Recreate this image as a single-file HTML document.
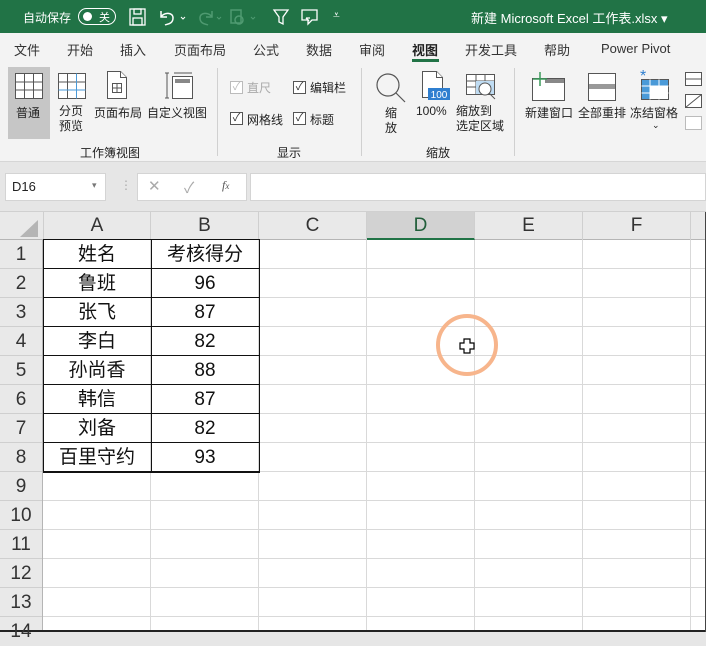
<!DOCTYPE html>
<html><head><meta charset="utf-8">
<style>
*{margin:0;padding:0;box-sizing:border-box}
body{width:706px;height:632px;overflow:hidden;position:relative;background:#e6e6e6;font-family:"Liberation Sans","Noto Sans CJK SC",sans-serif;color:#222}
.a{position:absolute}
.t{font-size:12px;white-space:nowrap}
#title{left:0;top:0;width:706px;height:33px;background:#217346;color:#fff}
#tabs{left:0;top:33px;width:706px;height:29px;background:#f3f3f3}
#rib{left:0;top:62px;width:706px;height:100px;background:#f3f3f3;border-bottom:1px solid #d6d6d6}
.tab{top:7px;font-size:13px;color:#333}
.sep{width:1px;background:#d0d0d0}
.cb{width:13px;height:13px;border:1px solid #555;background:#fff;font-size:11px;line-height:11px;text-align:center;color:#333}
.cell{position:absolute;text-align:center;font-size:19px;color:#111;line-height:29px}
.rn{position:absolute;left:0;width:42px;text-align:center;font-size:19px;color:#333;line-height:29px}
.ch{position:absolute;top:212px;height:28px;text-align:center;font-size:19px;line-height:28px;color:#333;border-right:1px solid #cfcfcf}
</style></head><body>
<div id="title" class="a">
 <div class="a t" style="left:23px;top:9px;font-size:12px">自动保存</div>
 <div class="a" style="left:78px;top:8px;width:38px;height:17px;border:1.5px solid #fff;border-radius:9px"></div>
 <div class="a" style="left:83px;top:12px;width:9px;height:9px;border-radius:50%;background:#fff"></div>
 <div class="a t" style="left:99px;top:9px;font-size:11px">关</div>
 <svg class="a" style="left:128px;top:7px" width="20" height="20" fill="none" stroke="#fff" stroke-width="1.3"><rect x="2" y="2" width="15" height="16"/><rect x="6" y="2" width="7" height="5"/><rect x="5" y="11" width="9" height="7"/></svg>
 <svg class="a" style="left:158px;top:8px" width="40" height="18" fill="none" stroke="#fff" stroke-width="1.5"><path d="M3 3v6h6M3 9c3-5 12-5 12 1s-6 6-8 7"/><path d="M23 9l2 2 2-2" stroke-width="1"/></svg>
 <svg class="a" style="left:198px;top:8px" width="70" height="18" fill="none" stroke="#4f9a71" stroke-width="1.5"><path d="M14 3v6H8M14 9c-3-5-12-5-12 1s6 6 8 7"/><path d="M19 9l2 2 2-2" stroke-width="1"/><rect x="33" y="2" width="10" height="13"/><circle cx="41" cy="12" r="4"/><path d="M53 9l2 2 2-2" stroke-width="1"/></svg>
 <svg class="a" style="left:272px;top:8px" width="18" height="18" fill="none" stroke="#fff" stroke-width="1.3"><path d="M2 2h14l-5 7v7l-4-2v-5z"/></svg>
 <svg class="a" style="left:300px;top:8px" width="20" height="18" fill="none" stroke="#fff" stroke-width="1.3"><path d="M2 2h15v10h-5l-4 4v-4H2z"/><path d="M6 10l3 3M6 10h4"/></svg>
 <div class="a t" style="left:333px;top:8px;font-size:12px">⩡</div>
 <div class="a t" style="left:471px;top:8px;font-size:13px">新建 Microsoft Excel 工作表.xlsx ▾</div>
</div>
<div id="tabs" class="a">
 <div class="a tab" style="left:14px">文件</div>
 <div class="a tab" style="left:67px">开始</div>
 <div class="a tab" style="left:120px">插入</div>
 <div class="a tab" style="left:174px">页面布局</div>
 <div class="a tab" style="left:253px">公式</div>
 <div class="a tab" style="left:306px">数据</div>
 <div class="a tab" style="left:359px">审阅</div>
 <div class="a tab" style="left:412px;font-weight:bold;color:#222">视图</div>
 <div class="a" style="left:412px;top:26px;width:27px;height:3px;background:#217346"></div>
 <div class="a tab" style="left:465px">开发工具</div>
 <div class="a tab" style="left:544px">帮助</div>
 <div class="a tab" style="left:601px;top:8px">Power Pivot</div>
</div>
<div id="rib" class="a">
 <div class="a" style="left:8px;top:5px;width:42px;height:72px;background:#c6c6c6"></div>
 <svg class="a" style="left:14px;top:10px" width="30" height="28" fill="#fff" stroke="#555" stroke-width="1"><rect x="1.5" y="1.5" width="27" height="25"/><path d="M10.5 1.5v25M19.5 1.5v25M1.5 10h27M1.5 18h27"/></svg>
 <div class="a t" style="left:16px;top:42px;font-size:12px">普通</div>
 <svg class="a" style="left:57px;top:10px" width="30" height="28" fill="#fff" stroke="#555" stroke-width="1"><rect x="1.5" y="1.5" width="27" height="25"/><path d="M10.5 1.5v25M1.5 10h27" /><path d="M19.5 1.5v25M1.5 18h27" stroke="#4a9ad8"/></svg>
 <div class="a t" style="left:59px;top:42px;line-height:15px">分页<br>预览</div>
 <svg class="a" style="left:105px;top:8px" width="24" height="30" fill="#fff" stroke="#555" stroke-width="1"><path d="M2.5 1.5h13l6 6v21h-19z"/><path d="M15.5 1.5v6h6"/><rect x="7.5" y="13.5" width="9" height="9"/><path d="M12 13.5v9M7.5 18h9"/></svg>
 <div class="a t" style="left:94px;top:42px">页面布局</div>
 <svg class="a" style="left:162px;top:8px" width="32" height="30" fill="#fff" stroke="#555" stroke-width="1"><path d="M3 3h4M5 3v25M3 28h4M12 3h18"/><rect x="10.5" y="6.5" width="20" height="22"/><rect x="13" y="9" width="15" height="4" fill="#888" stroke="none"/></svg>
 <div class="a t" style="left:147px;top:42px">自定义视图</div>
 <div class="a t" style="left:80px;top:82px">工作簿视图</div>
 <div class="a sep" style="left:217px;top:6px;height:88px"></div>
 <div class="a cb" style="left:230px;top:19px;border-color:#bbb;color:#bbb">✓</div><div class="a t" style="left:247px;top:17px;color:#aaa">直尺</div>
 <div class="a cb" style="left:293px;top:19px">✓</div><div class="a t" style="left:310px;top:17px">编辑栏</div>
 <div class="a cb" style="left:230px;top:50px">✓</div><div class="a t" style="left:247px;top:49px">网格线</div>
 <div class="a cb" style="left:293px;top:50px">✓</div><div class="a t" style="left:310px;top:49px">标题</div>
 <div class="a t" style="left:277px;top:82px">显示</div>
 <div class="a sep" style="left:361px;top:6px;height:88px"></div>
 <svg class="a" style="left:375px;top:10px" width="32" height="32" fill="none" stroke="#555" stroke-width="1.2"><circle cx="13" cy="13" r="11"/><path d="M21 21l9 9"/></svg>
 <div class="a t" style="left:385px;top:44px;line-height:15px">缩<br>放</div>
 <svg class="a" style="left:421px;top:8px" width="30" height="32" fill="#fff" stroke="#555" stroke-width="1"><path d="M1.5 1.5h14l6 6v20h-20z"/><path d="M15.5 1.5v6h6"/><rect x="7" y="18" width="22" height="12" fill="#2f7fd0" stroke="none"/><text x="18" y="28" font-size="10" fill="#fff" stroke="none" text-anchor="middle" font-family="Liberation Sans">100</text></svg>
 <div class="a t" style="left:416px;top:42px">100%</div>
 <svg class="a" style="left:465px;top:11px" width="34" height="30" fill="#fff" stroke="#555" stroke-width="1"><rect x="1.5" y="1.5" width="28" height="20"/><path d="M1.5 8h28M1.5 14h28M11 1.5v20M20 1.5v20"/><rect x="11" y="8" width="18" height="13" fill="#bfdcf3" stroke="none"/><circle cx="20" cy="16" r="6"/><path d="M24 20l6 6"/></svg>
 <div class="a t" style="left:456px;top:42px;line-height:15px">缩放到<br>选定区域</div>
 <div class="a t" style="left:426px;top:82px">缩放</div>
 <div class="a sep" style="left:514px;top:6px;height:88px"></div>
 <svg class="a" style="left:531px;top:10px" width="36" height="30" fill="#fff" stroke="#555" stroke-width="1"><rect x="1.5" y="6.5" width="32" height="22"/><rect x="14" y="7" width="19" height="4" fill="#888" stroke="none"/><path d="M9 0v14M2 7h14" stroke="#3a9a5a" stroke-width="1.5"/></svg>
 <div class="a t" style="left:525px;top:42px">新建窗口</div>
 <svg class="a" style="left:587px;top:10px" width="30" height="30" fill="#fff" stroke="#555" stroke-width="1"><rect x="1.5" y="1.5" width="27" height="27"/><rect x="2" y="12" width="26" height="5" fill="#999" stroke="none"/></svg>
 <div class="a t" style="left:578px;top:42px">全部重排</div>
 <svg class="a" style="left:638px;top:6px" width="32" height="34" fill="#fff" stroke="#555" stroke-width="1"><rect x="3.5" y="11.5" width="27" height="20"/><rect x="4" y="12" width="26" height="6" fill="#4a9ad8" stroke="none"/><rect x="4" y="12" width="8" height="19" fill="#4a9ad8" stroke="none"/><path d="M12 11.5v20M21 11.5v20M3.5 18h27M3.5 25h27" stroke="#fff"/><text x="2" y="13" font-size="16" fill="#2f7fd0" stroke="none" font-family="Liberation Sans">*</text></svg>
 <div class="a t" style="left:630px;top:42px">冻结窗格</div>
 <div class="a t" style="left:652px;top:58px;font-size:9px">⌄</div>
 <svg class="a" style="left:684px;top:8px" width="22" height="62" fill="#fff" stroke="#555" stroke-width="1"><rect x="1.5" y="2.5" width="16" height="13"/><path d="M1.5 9h16"/><rect x="1.5" y="24.5" width="16" height="13"/><path d="M1.5 37.5l16-13"/><rect x="1.5" y="46.5" width="16" height="13" stroke="#bbb"/></svg>
</div>
<div class="a" style="left:5px;top:173px;width:101px;height:28px;background:#fff;border:1px solid #d4d4d4"></div>
<div class="a t" style="left:12px;top:179px;font-size:13px">D16</div>
<div class="a" style="left:92px;top:180px;font-size:9px;color:#777">▾</div>
<div class="a" style="left:120px;top:178px;font-size:12px;color:#aaa">⋮</div>
<div class="a" style="left:137px;top:173px;width:110px;height:28px;background:#fff;border:1px solid #d4d4d4"></div>
<div class="a" style="left:148px;top:177px;font-size:15px;color:#aaa">✕</div>
<div class="a" style="left:184px;top:177px;font-size:15px;color:#aaa">✓</div>
<div class="a" style="left:222px;top:178px;font-size:12px;color:#555;font-style:italic;font-family:'Liberation Serif',serif">f<span style="font-size:9px">x</span></div>
<div class="a" style="left:250px;top:173px;width:456px;height:28px;background:#fff;border:1px solid #d4d4d4"></div>
<div class="a" style="left:0;top:211px;width:706px;height:29px;background:#e9e9e9;border-top:1px solid #d0d0d0;border-bottom:1px solid #b5b5b5"></div>
<svg class="a" style="left:18px;top:218px" width="22" height="20"><path d="M20 2v17H2z" fill="#b5b5b5"/></svg>
<div class="ch" style="left:43px;width:108px;border-left:1px solid #cfcfcf">A</div>
<div class="ch" style="left:151px;width:108px">B</div>
<div class="ch" style="left:259px;width:108px">C</div>
<div class="ch" style="left:367px;width:108px;background:#d2d2d2;color:#215e3a;border-bottom:2px solid #217346">D</div>
<div class="ch" style="left:475px;width:108px">E</div>
<div class="ch" style="left:583px;width:108px">F</div>
<div class="a" style="left:0;top:240px;width:43px;height:392px;background:#e9e9e9;border-right:1px solid #b5b5b5;
background-image:repeating-linear-gradient(to bottom,transparent 0 28px,#cfcfcf 28px 29px)"></div>
<div class="a" style="left:43px;top:240px;width:663px;height:392px;background-color:#fff;
background-image:repeating-linear-gradient(to bottom,transparent 0 28px,#d9d9d9 28px 29px),repeating-linear-gradient(to right,transparent 0 107px,#d9d9d9 107px 108px)"></div>
<div class="a" style="left:43px;top:239px;width:217px;height:234px;border:1px solid #111;
background-image:repeating-linear-gradient(to bottom,transparent 0 28px,#111 28px 29px)"></div>
<div class="a" style="left:151px;top:240px;width:1px;height:232px;background:#111"></div>
<div class="a" style="left:0;top:630px;width:706px;height:2px;background:#222"></div>
<div class="a" style="left:705px;top:212px;width:1px;height:420px;background:#444"></div>
<div class="rn" style="top:240px">1</div><div class="rn" style="top:269px">2</div><div class="rn" style="top:298px">3</div><div class="rn" style="top:327px">4</div><div class="rn" style="top:356px">5</div><div class="rn" style="top:385px">6</div><div class="rn" style="top:414px">7</div><div class="rn" style="top:443px">8</div><div class="rn" style="top:472px">9</div><div class="rn" style="top:501px">10</div><div class="rn" style="top:530px">11</div><div class="rn" style="top:559px">12</div><div class="rn" style="top:588px">13</div><div class="rn" style="top:617px">14</div>
<div class="cell" style="left:43px;width:108px;top:240px">姓名</div><div class="cell" style="left:151px;width:108px;top:240px">考核得分</div>
<div class="cell" style="left:43px;width:108px;top:269px">鲁班</div><div class="cell" style="left:151px;width:108px;top:269px">96</div>
<div class="cell" style="left:43px;width:108px;top:298px">张飞</div><div class="cell" style="left:151px;width:108px;top:298px">87</div>
<div class="cell" style="left:43px;width:108px;top:327px">李白</div><div class="cell" style="left:151px;width:108px;top:327px">82</div>
<div class="cell" style="left:43px;width:108px;top:356px">孙尚香</div><div class="cell" style="left:151px;width:108px;top:356px">88</div>
<div class="cell" style="left:43px;width:108px;top:385px">韩信</div><div class="cell" style="left:151px;width:108px;top:385px">87</div>
<div class="cell" style="left:43px;width:108px;top:414px">刘备</div><div class="cell" style="left:151px;width:108px;top:414px">82</div>
<div class="cell" style="left:43px;width:108px;top:443px">百里守约</div><div class="cell" style="left:151px;width:108px;top:443px">93</div>
<svg class="a" style="left:430px;top:308px" width="74" height="74"><circle cx="37" cy="37" r="29" fill="none" stroke="#f7b58c" stroke-width="4"/><path d="M34 31h6v4h4v6h-4v4h-6v-4h-4v-6h4z" fill="#fff" stroke="#000" stroke-width="1.2"/></svg>
</body></html>
